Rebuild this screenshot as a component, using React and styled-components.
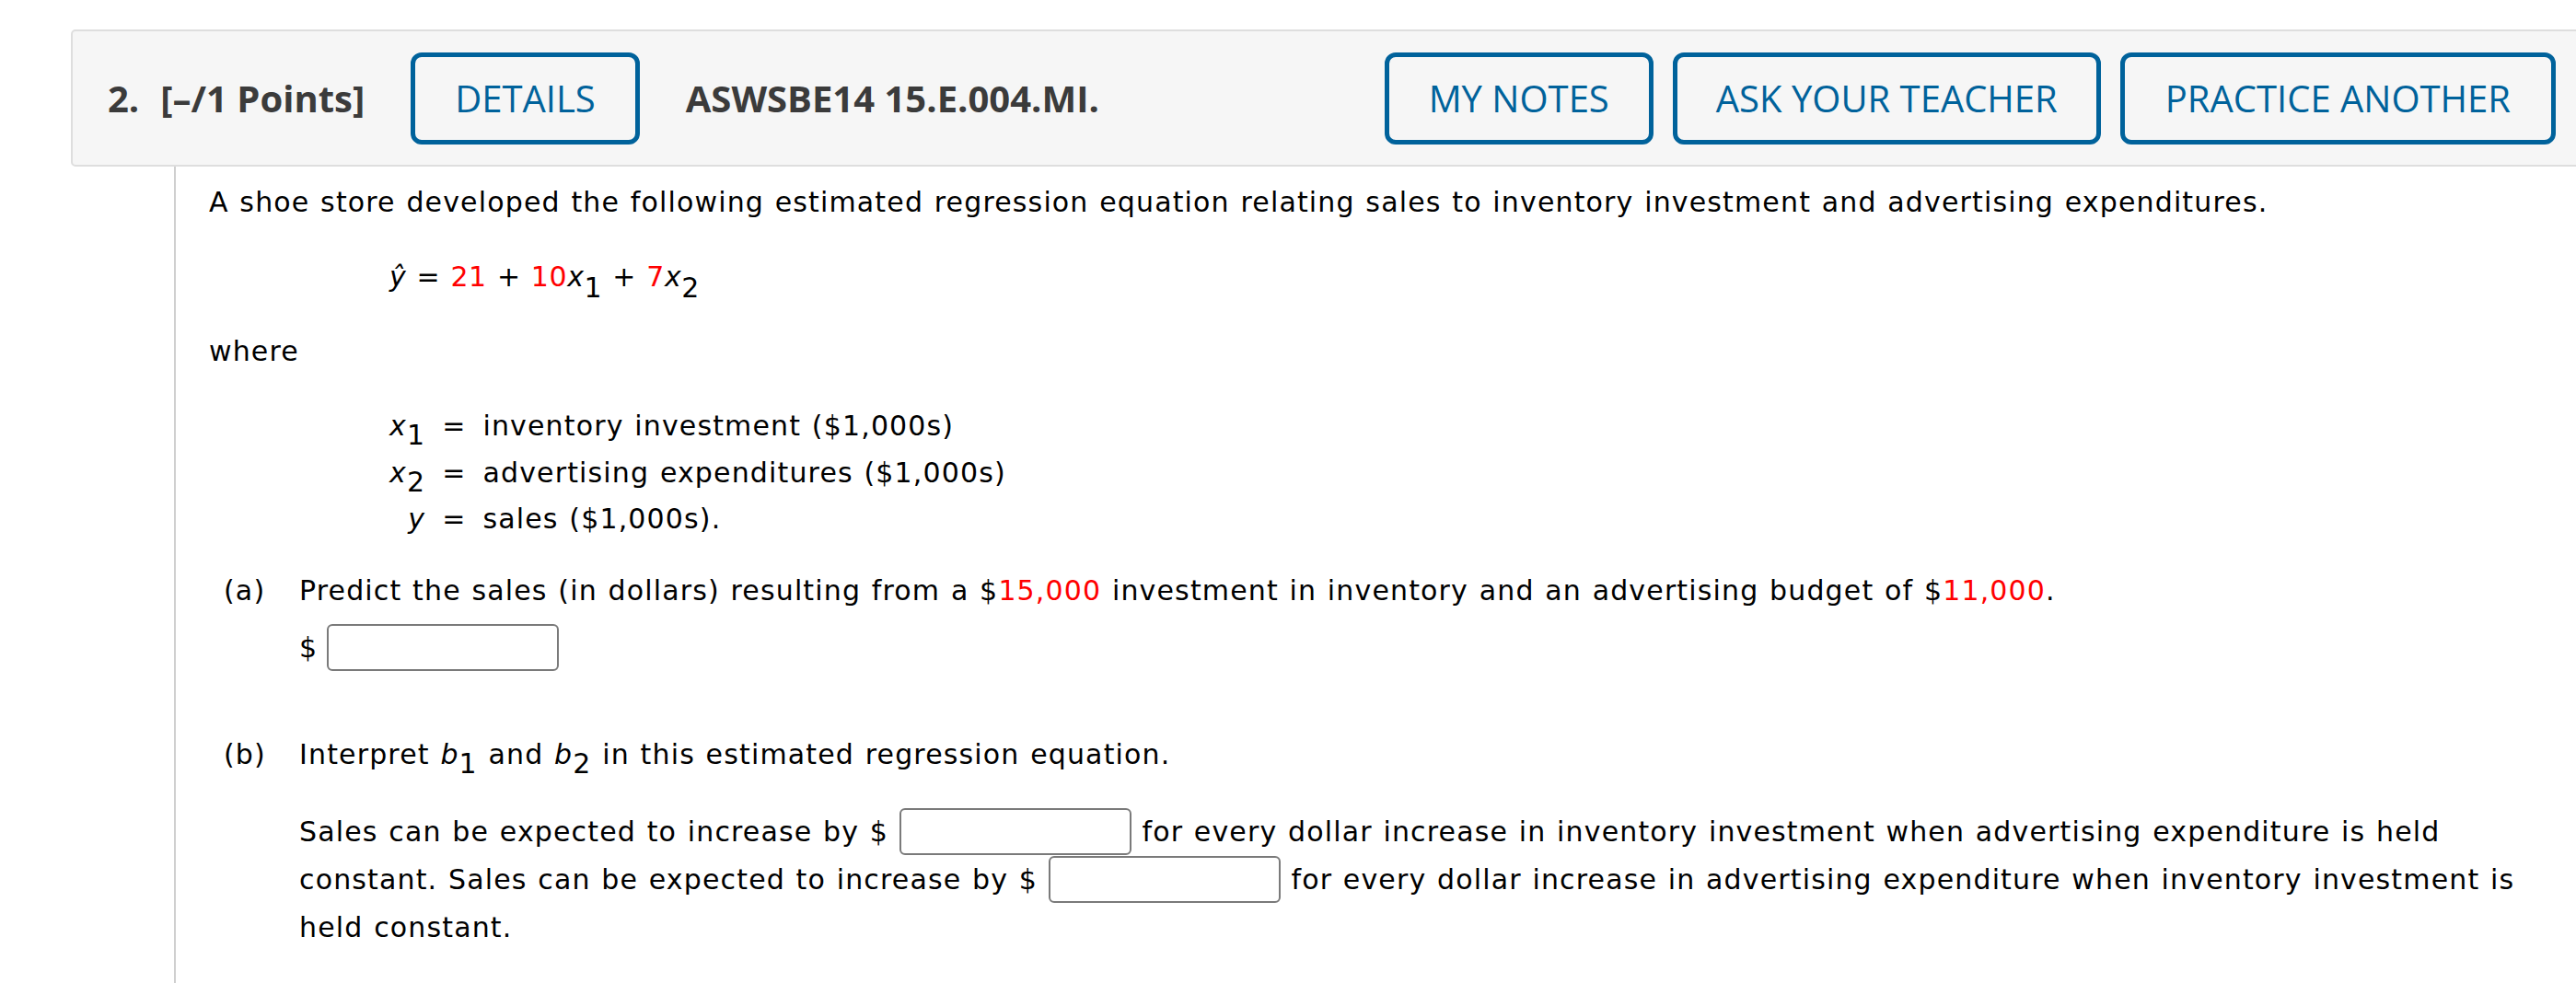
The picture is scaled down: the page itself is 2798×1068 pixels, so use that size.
import React from 'react';
import styled, { createGlobalStyle } from 'styled-components';

const GlobalStyle = createGlobalStyle`
  html, body {
    margin: 0;
    padding: 0;
    background: #fff;
    overflow: hidden;
  }
`;

const Page = styled.div`
  padding: 32px 0 0 77px;
  min-height: 1068px;
  box-sizing: border-box;
`;

const QuestionBar = styled.div`
  display: flex;
  align-items: center;
  height: 149px;
  box-sizing: border-box;
  margin-right: -10px;
  padding: 0 30px 0 38px;
  background: #f6f6f6;
  border: 2px solid #dedede;
  border-radius: 5px;
  font-family: "Open Sans", "Liberation Sans", sans-serif;
  font-size: 40px;
  color: #3b3b3b;
`;

const Number = styled.span`
  font-weight: 700;
`;

const Points = styled.span`
  font-weight: 700;
  margin-left: 23px;
`;

const Title = styled.span`
  font-weight: 700;
  margin-left: 50px;
`;

const Actions = styled.div`
  display: flex;
  gap: 21px;
  margin-left: auto;
`;

const BarButton = styled.button`
  height: 100px;
  box-sizing: border-box;
  padding: 0 ${p => p.$pad || 42}px;
  margin-left: ${p => p.$offset || 0}px;
  border: 5px solid #00629b;
  border-radius: 12px;
  background: transparent;
  color: #00629b;
  font-family: inherit;
  font-size: 40px;
  font-weight: 500;
  white-space: nowrap;
`;

const Body = styled.div`
  margin-left: 112px;
  border-left: 2px solid #cfcfcf;
  padding: 13px 33px 0 36px;
  min-height: 887px;
  box-sizing: border-box;
  font-family: "DejaVu Sans", Verdana, sans-serif;
  font-size: 30px;
  line-height: 52px;
  letter-spacing: 1.15px;
  word-spacing: 1px;
  color: #000;
`;

const Para = styled.p`
  margin: ${p => p.$top || 0}px 0 0;
`;

const Equation = styled.div`
  margin: 29px 0 0 196px;
  letter-spacing: 0.6px;
`;

const Red = styled.span`
  color: #f00;
`;

const Var = styled.i`
  font-style: italic;
`;

const Sub = styled.sub`
  font-size: inherit;
  line-height: 0;
  vertical-align: ${p => p.$drop || -10}px;
`;

const Defs = styled.div`
  display: grid;
  grid-template-columns: auto auto 1fr;
  column-gap: 18px;
  grid-auto-rows: 50.5px;
  line-height: 50.5px;
  margin: 30px 0 0 196px;
`;

const DefVar = styled.span`
  text-align: right;
`;

const Part = styled.div`
  display: grid;
  grid-template-columns: 82px 1fr;
  margin: ${p => p.$top}px 0 0 16px;
`;

const PartBody = styled.div``;

const AnswerRow = styled.div`
  display: flex;
  align-items: center;
  gap: 10px;
  margin-top: 10px;
`;

const Blank = styled.input`
  width: 252px;
  height: 51px;
  box-sizing: border-box;
  border: 2px solid #7a7a7a;
  border-radius: 6px;
  background: #fff;
  padding: 0 8px;
  font: inherit;
  vertical-align: top;
`;

const Interp = styled.p`
  margin: 32px 0 0;
`;

export default function App() {
  return (
    <>
      <GlobalStyle />
      <Page>
        <QuestionBar>
          <Number>2.</Number>
          <Points>[–/1 Points]</Points>
          <BarButton $offset={50} $pad={43}>DETAILS</BarButton>
          <Title>ASWSBE14 15.E.004.MI.</Title>
          <Actions>
            <BarButton $pad={43}>MY NOTES</BarButton>
            <BarButton>ASK YOUR TEACHER</BarButton>
            <BarButton $pad={44}>PRACTICE ANOTHER</BarButton>
          </Actions>
        </QuestionBar>

        <Body>
          <Para>
            A shoe store developed the following estimated regression equation relating sales to inventory investment and advertising expenditures.
          </Para>
          <Equation>
            <Var>ŷ</Var> = <Red>21</Red> + <Red>10</Red><Var>x</Var><Sub $drop={-12}>1</Sub> + <Red>7</Red><Var>x</Var><Sub $drop={-12}>2</Sub>
          </Equation>
          <Para $top={29}>where</Para>
          <Defs>
            <DefVar><Var>x</Var><Sub>1</Sub></DefVar>
            <span>=</span>
            <span>inventory investment ($1,000s)</span>
            <DefVar><Var>x</Var><Sub>2</Sub></DefVar>
            <span>=</span>
            <span>advertising expenditures ($1,000s)</span>
            <DefVar><Var>y</Var></DefVar>
            <span>=</span>
            <span>sales ($1,000s).</span>
          </Defs>

          <Part $top={26}>
            <span>(a)</span>
            <PartBody>
              Predict the sales (in dollars) resulting from a $<Red>15,000</Red> investment in inventory and an advertising budget of $<Red>11,000</Red>.
              <AnswerRow>
                <span>$</span>
                <Blank type="text" aria-label="predicted sales" />
              </AnswerRow>
            </PartBody>
          </Part>

          <Part $top={64}>
            <span>(b)</span>
            <PartBody>
              Interpret <Var>b</Var><Sub>1</Sub> and <Var>b</Var><Sub>2</Sub> in this estimated regression equation.
              <Interp>
                Sales can be expected to increase by $ <Blank type="text" aria-label="b1" /> for every dollar increase in inventory investment when advertising expenditure is held constant. Sales can be expected to increase by $ <Blank type="text" aria-label="b2" /> for every dollar increase in advertising expenditure when inventory investment is held constant.
              </Interp>
            </PartBody>
          </Part>
        </Body>
      </Page>
    </>
  );
}
